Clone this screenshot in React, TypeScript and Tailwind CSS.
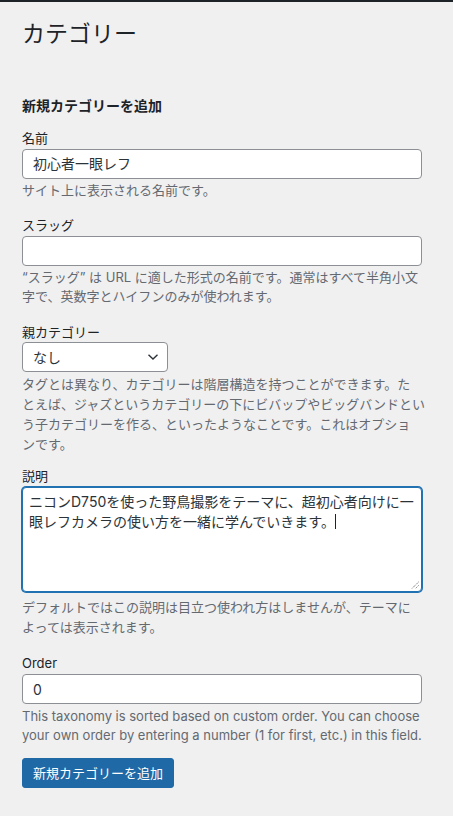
export default function App() {
  const font = { fontFamily: 'Inter, "Noto Sans CJK JP", sans-serif' }
  return (
    <div className="min-h-[816px] w-[453px] bg-[#f0f0f1] text-[#1d2327]" style={font}>
      <div className="h-[2px] bg-[#1d2327]" />
      <div className="pl-[22px] pr-[30px]">
        <h1 className="mt-[18px] text-[23px] font-normal leading-[1.3]">カテゴリー</h1>

        <h2 className="mt-[46px] text-[14px] font-bold leading-[1.4]">新規カテゴリーを追加</h2>

        {/* 名前 */}
        <div className="mt-[14px]">
          <label className="block text-[13px] leading-[1.5]">名前</label>
          <div className="flex h-[30px] w-[400px] items-center rounded-[4px] border border-[#8c8f94] bg-white px-[10px] text-[14px] text-[#2c3338]">
            初心者一眼レフ
          </div>
          <p className="mt-[2px] text-[13px] leading-[1.5] text-[#646970]">サイト上に表示される名前です。</p>
        </div>

        {/* スラッグ */}
        <div className="mt-[16px]">
          <label className="block text-[13px] leading-[1.5]">スラッグ</label>
          <div className="h-[30px] w-[400px] rounded-[4px] border border-[#8c8f94] bg-white" />
          <p className="mt-[2px] w-[410px] text-[13px] leading-[1.5] text-[#646970]">
            “スラッグ” は URL に適した形式の名前です。通常はすべて半角小文
            <br />
            字で、英数字とハイフンのみが使われます。
          </p>
        </div>

        {/* 親カテゴリー */}
        <div className="mt-[16px]">
          <label className="block text-[13px] leading-[1.5]">親カテゴリー</label>
          <div className="flex h-[30px] w-[146px] items-center justify-between rounded-[4px] border border-[#8c8f94] bg-white pl-[10px] pr-[8px] text-[14px] text-[#2c3338]">
            <span>なし</span>
            <svg width="12" height="8" viewBox="0 0 12 8" fill="none">
              <path d="M1.5 1.8 6 6 10.5 1.8" stroke="#2c3338" strokeWidth="1.4" />
            </svg>
          </div>
          <p className="mt-[2px] w-[410px] text-[13px] leading-[20px] text-[#646970]">
            タグとは異なり、カテゴリーは階層構造を持つことができます。た
            <br />
            とえば、ジャズというカテゴリーの下にビバップやビッグバンドとい
            <br />
            う子カテゴリーを作る、といったようなことです。これはオプショ
            <br />
            ンです。
          </p>
        </div>

        {/* 説明 */}
        <div className="mt-[13px]">
          <label className="block text-[13px] leading-[1.5]">説明</label>
          <div className="relative h-[105px] w-[400px] rounded-[4px] border border-[#2271b1] bg-white px-[6px] py-[4px] text-[14px] leading-[20px] text-[#2c3338] shadow-[0_0_0_1px_#2271b1]">
            ニコンD750を使った野鳥撮影をテーマに、超初心者向けに一眼レフカメラの使い方を一緒に学んでいきます。
            <span className="inline-block h-[15px] w-px translate-y-[2px] bg-[#1d2327]" />
            <svg className="absolute bottom-[2px] right-[2px]" width="8" height="8" viewBox="0 0 8 8">
              <path d="M7.5 1 1 7.5M7.5 4.5 4.5 7.5" stroke="#555" strokeWidth="1" strokeDasharray="1 1" />
            </svg>
          </div>
          <p className="mt-[5px] w-[400px] text-[13px] leading-[20px] text-[#646970]">
            デフォルトではこの説明は目立つ使われ方はしませんが、テーマによっては表示されます。
          </p>
        </div>

        {/* Order */}
        <div className="mt-[17px]">
          <label className="block text-[13px] leading-[1.5]">Order</label>
          <div className="mt-[1px] flex h-[30px] w-[400px] items-center rounded-[4px] border border-[#8c8f94] bg-white px-[10px] text-[14px] text-[#2c3338]">
            0
          </div>
          <p className="mt-[3px] w-[400px] text-[13px] leading-[18.5px] text-[#646970]">
            This taxonomy is sorted based on custom order. You can choose your own order by entering a number (1 for first, etc.) in this field.
          </p>
        </div>

        <button className="mt-[14px] h-[30px] rounded-[3px] border border-[#1f69a6] bg-[#1f69a6] px-[10px] text-[13px] text-white">
          新規カテゴリーを追加
        </button>
      </div>
    </div>
  )
}
